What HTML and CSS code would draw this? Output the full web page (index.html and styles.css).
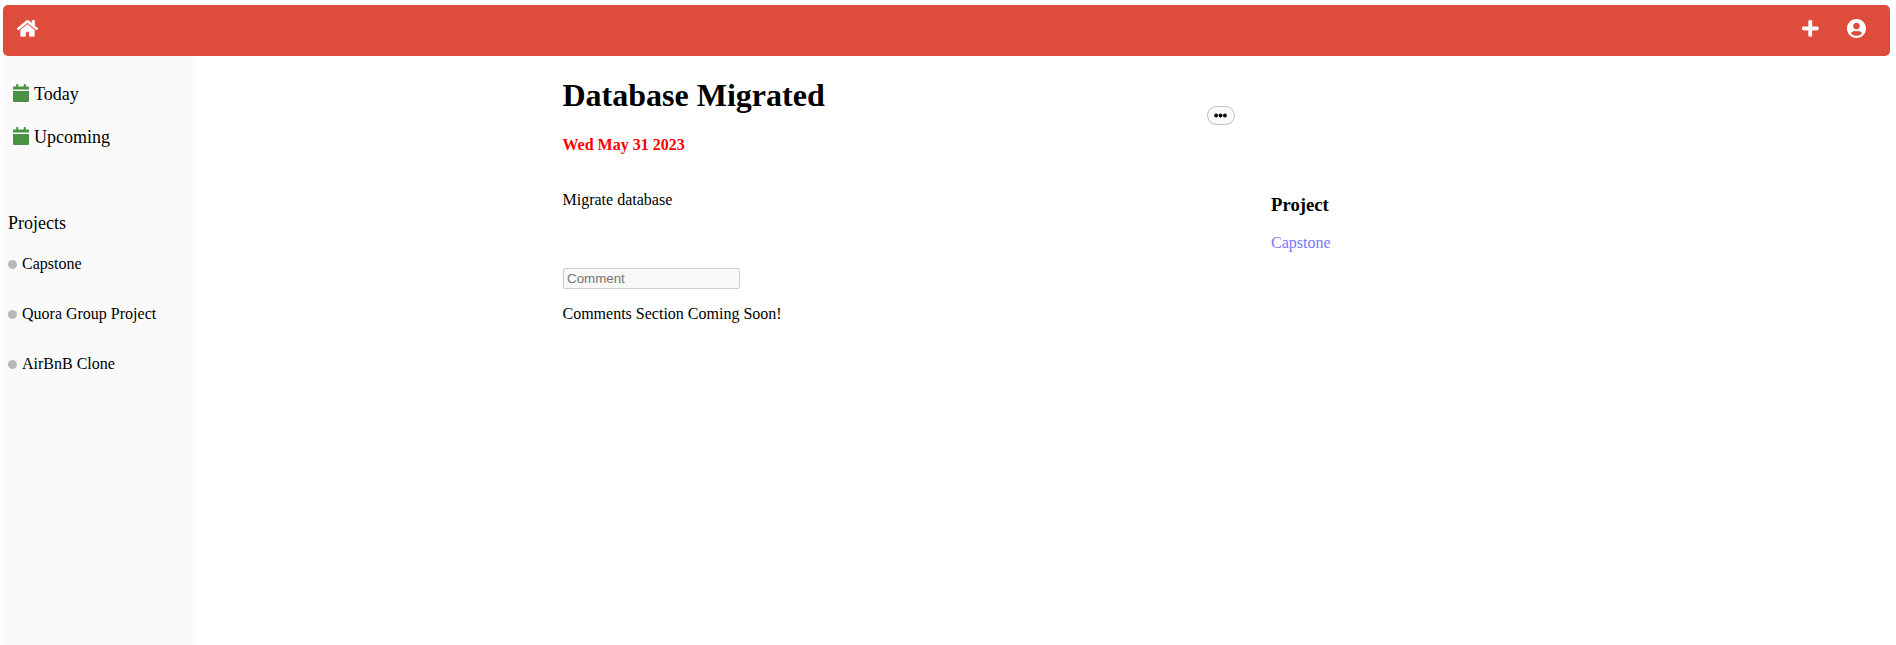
FILE: index.html
```html
<!DOCTYPE html>
<html lang="en">
<head>
<meta charset="utf-8">
<title>Database Migrated</title>
<link rel="stylesheet" href="styles.css">
</head>
<body>
<header class="navbar">
  <svg class="icon-home" viewBox="0 0 576 512"><path d="M280.37 148.26L96 300.11V464a16 16 0 0 0 16 16l112.06-.29a16 16 0 0 0 15.92-16V368a16 16 0 0 1 16-16h64a16 16 0 0 1 16 16v95.64a16 16 0 0 0 16 16.05L464 480a16 16 0 0 0 16-16V300L295.67 148.26a12.19 12.19 0 0 0-15.3 0zM571.6 251.47L488 182.56V44.05a12 12 0 0 0-12-12h-56a12 12 0 0 0-12 12v72.61L318.47 43a48 48 0 0 0-61 0L4.34 251.47a12 12 0 0 0-1.6 16.9l25.5 31A12 12 0 0 0 45.15 301l235.22-193.74a12.19 12.19 0 0 1 15.3 0L530.9 301a12 12 0 0 0 16.9-1.6l25.5-31a12 12 0 0 0-1.7-16.93z"/></svg>
  <div class="nav-actions">
    <svg class="icon-plus" viewBox="0 0 448 512"><path d="M416 208H272V64c0-17.67-14.33-32-32-32h-32c-17.67 0-32 14.33-32 32v144H32c-17.67 0-32 14.33-32 32v32c0 17.67 14.33 32 32 32h144v144c0 17.67 14.33 32 32 32h32c17.67 0 32-14.33 32-32V304h144c17.67 0 32-14.33 32-32v-32c0-17.67-14.33-32-32-32z"/></svg>
    <svg class="icon-user" viewBox="0 8 496 496"><path d="M248 8C111 8 0 119 0 256s111 248 248 248 248-111 248-248S385 8 248 8zm0 96c48.6 0 88 39.4 88 88s-39.4 88-88 88-88-39.4-88-88 39.4-88 88-88zm0 344c-58.7 0-111.3-26.6-146.5-68.2 18.8-35.4 55.6-59.8 98.5-59.8 2.4 0 4.8.4 7.1 1.1 13 4.2 26.6 6.9 40.9 6.9 14.3 0 28-2.7 40.9-6.9 2.3-.7 4.7-1.1 7.1-1.1 42.9 0 79.7 24.4 98.5 59.8C359.3 421.4 306.7 448 248 448z"/></svg>
  </div>
</header>
<div class="layout">
  <nav class="sidebar">
    <div class="views">
      <a class="view"><svg class="icon-calendar" viewBox="0 0 16 18"><path d="M0 7h16v10q0 1-1 1H1q-1 0-1-1zM0 5.6V3.4q0-.9.9-.9h2.3V.5q0-.5.5-.5h1q.5 0 .5.5v2h5.6v-2q0-.5.5-.5h1q.5 0 .5.5v2h2.3q.9 0 .9.9v2.2z"/></svg>Today</a>
      <a class="view"><svg class="icon-calendar" viewBox="0 0 16 18"><path d="M0 7h16v10q0 1-1 1H1q-1 0-1-1zM0 5.6V3.4q0-.9.9-.9h2.3V.5q0-.5.5-.5h1q.5 0 .5.5v2h5.6v-2q0-.5.5-.5h1q.5 0 .5.5v2h2.3q.9 0 .9.9v2.2z"/></svg>Upcoming</a>
    </div>
    <div class="projects-heading">Projects</div>
    <div class="projects">
      <a class="project"><span class="dot"></span>Capstone</a>
      <a class="project"><span class="dot"></span>Quora Group Project</a>
      <a class="project"><span class="dot"></span>AirBnB Clone</a>
    </div>
  </nav>
  <main class="task">
    <section class="task-body">
      <h1 class="task-title">Database Migrated</h1>
      <div class="due-date">Wed May 31 2023</div>
      <p class="description">Migrate database</p>
      <input class="comment-input" type="text" placeholder="Comment">
      <p class="comments-note">Comments Section Coming Soon!</p>
    </section>
    <button class="more-button" aria-label="More"><svg class="icon-more" viewBox="0 0 13 5"><circle cx="2.1" cy="2.5" r="1.9"/><circle cx="6.5" cy="2.5" r="1.9"/><circle cx="10.9" cy="2.5" r="1.9"/></svg></button>
    <aside class="task-project">
      <h3 class="aside-title">Project</h3>
      <a class="project-link">Capstone</a>
    </aside>
  </main>
</div>
</body>
</html>
```
FILE: styles.css
```css
* { box-sizing: border-box; }
body {
  margin: 0;
  padding: 5px 6px 0 3px;
  height: 645px;
  overflow: hidden;
  background: #fff;
  color: #000;
  font: 16px/18px "Liberation Serif", "Times New Roman", serif;
  display: flex;
  flex-direction: column;
}
h1, h3, p { margin: 0; }
svg { display: block; flex: none; }
.navbar {
  height: 51px;
  flex: none;
  display: flex;
  justify-content: space-between;
  align-items: flex-start;
  padding: 14px 24px 0 14px;
  border-radius: 5px;
  background: #de4c3c;
  fill: #fff;
}
.icon-home {
  width: 21px;
  height: 18.67px;
  stroke: #fff;
  stroke-width: 8;
}
.nav-actions { display: flex; gap: 28.5px; }
.icon-plus {
  width: 16.5px;
  height: 18.8px;
  stroke: #fff;
  stroke-width: 10;
}
.icon-user { width: 19px; height: 19px; }
.layout { display: flex; flex: 1; }
.sidebar {
  width: 192px;
  flex: none;
  background: #fafafa;
  padding: 28px 5px 0;
}
.views {
  display: flex;
  flex-direction: column;
  gap: 23px;
  padding-left: 5px;
}
.view, .projects-heading { font-size: 18px; line-height: 20px; }
.view { display: flex; gap: 5px; }
.icon-calendar { width: 16px; height: 18px; fill: #4a9145; }
.projects-heading { margin-top: 66px; }
.projects {
  display: flex;
  flex-direction: column;
  gap: 32px;
  margin-top: 22px;
}
.project { display: flex; align-items: center; gap: 5px; }
.dot { width: 9px; height: 9px; border-radius: 50%; background: #b8b8b8; }
.task { display: flex; align-items: flex-start; padding-left: 367.5px; }
.task-body { width: 644.5px; padding-top: 21px; }
.task-title { font-size: 32px; line-height: 36px; }
.due-date { margin-top: 23px; font-weight: bold; color: #f00; }
.description { margin-top: 37px; }
.comment-input {
  display: block;
  width: 177px;
  height: 21px;
  margin: 59px 0 0 0.5px;
  padding: 1px 3px;
  border: 1px solid #ccc;
  border-radius: 2px;
  background: #f8f8f8;
  font: 13.333px "Liberation Sans", Arial, sans-serif;
}
.comment-input::placeholder { color: #757575; }
.comments-note { margin-top: 16px; }
.more-button {
  width: 28px;
  height: 19px;
  margin-top: 50px;
  padding: 0 1px 0 0;
  display: flex;
  align-items: center;
  justify-content: center;
  border: 1px solid #bdbdbd;
  border-radius: 10px;
  background: #fafafa;
}
.icon-more { width: 13px; height: 5px; }
.task-project { padding: 138px 0 0 36px; }
.aside-title { font-size: 18.72px; line-height: 22px; }
.project-link { display: block; margin-top: 18px; color: #7878ff; }
```
